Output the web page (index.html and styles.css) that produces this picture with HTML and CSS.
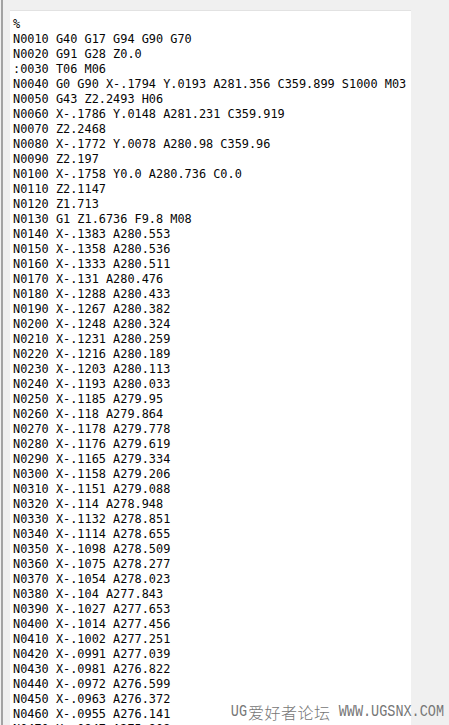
FILE: index.html
```html
<!DOCTYPE html>
<html lang="zh-CN">
<head>
<meta charset="utf-8">
<title>NC Program</title>
<link rel="stylesheet" href="styles.css">
</head>
<body>
<div class="frame">
<div class="panel"><pre class="code">%
N0010 G40 G17 G94 G90 G70
N0020 G91 G28 Z0.0
:0030 T06 M06
N0040 G0 G90 X-.1794 Y.0193 A281.356 C359.899 S1000 M03
N0050 G43 Z2.2493 H06
N0060 X-.1786 Y.0148 A281.231 C359.919
N0070 Z2.2468
N0080 X-.1772 Y.0078 A280.98 C359.96
N0090 Z2.197
N0100 X-.1758 Y0.0 A280.736 C0.0
N0110 Z2.1147
N0120 Z1.713
N0130 G1 Z1.6736 F9.8 M08
N0140 X-.1383 A280.553
N0150 X-.1358 A280.536
N0160 X-.1333 A280.511
N0170 X-.131 A280.476
N0180 X-.1288 A280.433
N0190 X-.1267 A280.382
N0200 X-.1248 A280.324
N0210 X-.1231 A280.259
N0220 X-.1216 A280.189
N0230 X-.1203 A280.113
N0240 X-.1193 A280.033
N0250 X-.1185 A279.95
N0260 X-.118 A279.864
N0270 X-.1178 A279.778
N0280 X-.1176 A279.619
N0290 X-.1165 A279.334
N0300 X-.1158 A279.206
N0310 X-.1151 A279.088
N0320 X-.114 A278.948
N0330 X-.1132 A278.851
N0340 X-.1114 A278.655
N0350 X-.1098 A278.509
N0360 X-.1075 A278.277
N0370 X-.1054 A278.023
N0380 X-.104 A277.843
N0390 X-.1027 A277.653
N0400 X-.1014 A277.456
N0410 X-.1002 A277.251
N0420 X-.0991 A277.039
N0430 X-.0981 A276.822
N0440 X-.0972 A276.599
N0450 X-.0963 A276.372
N0460 X-.0955 A276.141
N0470 X-.0947 A275.908
N0480 X-.0939 A275.672</pre></div>
</div>
<div class="watermark"><span class="wm-latin">UG</span><span class="wm-cjk">爱好者论坛</span><span class="wm-latin"> WWW.UGSNX.COM</span></div>
</body>
</html>
```

FILE: styles.css
```css
html, body {
  margin: 0;
  padding: 0;
  height: 100%;
  overflow: hidden;
  background: #f0f0f0;
}

.frame {
  box-sizing: border-box;
  height: 100vh;
  margin-left: 1px;
  border-left: 2px solid #a3a3a3;
  padding: 10px 0 0 7px;
}

.panel {
  box-sizing: border-box;
  width: 401px;
  height: 100%;
  background: #ffffff;
  border-top: 1px solid #e2e2e2;
  padding: 6px 0 0 3px;
  overflow: hidden;
}

.code {
  margin: 0;
  font-family: "DejaVu Sans Mono", monospace;
  font-size: 11.88px;
  line-height: 15px;
  color: #050505;
  white-space: pre;
}

.watermark {
  position: absolute;
  right: 5px;
  bottom: 5px;
  color: #767676;
  line-height: 16px;
  white-space: pre;
  display: flex;
  align-items: center;
}

.wm-latin {
  display: inline-block;
  font-family: "Liberation Mono", monospace;
  font-size: 13.5px;
  transform: scaleY(1.2);
}

.wm-cjk {
  font-family: "Noto Sans CJK SC", sans-serif;
  font-size: 16px;
  font-weight: 300;
  letter-spacing: 0.5px;
  padding-left: 1px;
}
```
